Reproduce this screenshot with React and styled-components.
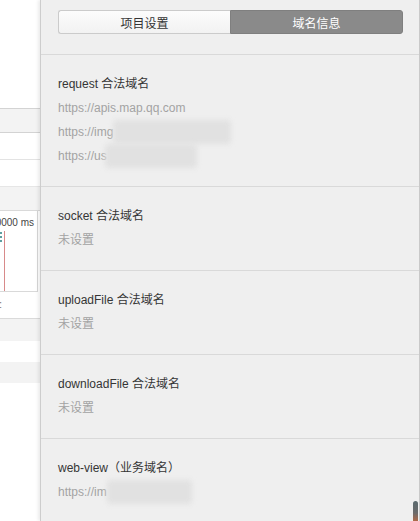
import React from "react";
import styled, { createGlobalStyle } from "styled-components";

const Global = createGlobalStyle`
  html, body { margin: 0; padding: 0; background: #fff; }
  body { font-family: "Liberation Sans", Arial, "Noto Sans CJK SC", sans-serif; }
`;

const Page = styled.div`
  display: flex;
  width: 420px;
  height: 521px;
  overflow: hidden;
`;

const Left = styled.div`
  width: 40px;
  flex: none;
  display: flex;
  flex-direction: column;
  background: #fff;
  overflow: hidden;
`;

const Strip = styled.div`
  height: ${(p) => p.$h}px;
  flex: none;
  background: ${(p) => (p.$gray ? "#f3f3f3" : "#fff")};
  border-bottom: 1px solid ${(p) => p.$line || "transparent"};
  box-sizing: border-box;
  position: relative;
  font-size: 11px;
  color: #555;
`;

const ChartBox = styled.div`
  height: 81px;
  width: 38px;
  flex: none;
  box-sizing: border-box;
  border-right: 1px solid #d6d6d6;
  border-bottom: 1px solid #d9d9d9;
  display: flex;
  flex-direction: column;
  overflow: hidden;
`;

const ChartLabel = styled.div`
  display: flex;
  justify-content: flex-end;
  font-family: "Liberation Sans", Arial, sans-serif;
  font-size: 10px;
  color: #444;
  white-space: nowrap;
  padding: 6px 3px 0 0;
  line-height: 12px;
  overflow: hidden;
`;

const ChartBody = styled.div`
  flex: 1;
  display: flex;
`;

const Dashes = styled.div`
  width: 2px;
  margin-top: 3px;
  height: 10px;
  border-left: 2px dotted #5f9ea0;
`;

const RedLine = styled.div`
  width: 1px;
  margin-left: 0;
  margin-top: 2px;
  background: #d88a8a;
`;

const Colon = styled.span`
  position: absolute;
  left: -1px;
  top: 6px;
  color: #777;
`;

const Panel = styled.div`
  flex: 1;
  position: relative;
  background: #efefef;
  border-left: 1px solid #cdcdcd;
  border-right: 1px solid #c9c9c9;
  box-shadow: -2px 0 3px rgba(0, 0, 0, 0.08);
  display: flex;
  flex-direction: column;
`;

const Header = styled.div`
  height: 55px;
  flex: none;
  box-sizing: border-box;
  padding: 10px 16px 0 17px;
  border-bottom: 1px solid #d9d9d9;
`;

const Tabs = styled.div`
  display: flex;
  height: 24px;
`;

const Tab = styled.div`
  flex: 1;
  display: flex;
  align-items: center;
  justify-content: center;
  font-size: 12px;
  box-sizing: border-box;
  font-family: "Noto Sans CJK SC", sans-serif;
  ${(p) =>
    p.$active
      ? `background: #8a8a8a; color: #fff; border: 1px solid #7f7f7f; border-radius: 0 3px 3px 0;`
      : `background: linear-gradient(#fcfcfc, #f2f2f2); color: #333; border: 1px solid #cbcbcb; border-right: none; border-radius: 3px 0 0 3px;`}
`;

const Section = styled.div`
  padding: 17px 17px 18px 17px;
  border-bottom: 1px solid ${(p) => (p.$last ? "transparent" : "#d9d9d9")};
`;

const Title = styled.div`
  font-size: 12px;
  line-height: 24px;
  color: #353535;
  white-space: nowrap;
`;

const Value = styled.div`
  font-size: 12px;
  line-height: 24px;
  color: #a3a3a3;
  white-space: nowrap;
  display: flex;
  align-items: center;
`;

const Blur = styled.span`
  display: inline-block;
  width: ${(p) => p.$w}px;
  height: 24px;
  margin-left: ${(p) => p.$ml || 0}px;
  background: #e1e1e1;
  filter: blur(2.5px);
  border-radius: 4px;
`;

const Scroll = styled.div`
  position: absolute;
  right: 1px;
  bottom: 0;
  width: 5px;
  height: 20px;
  border-radius: 3px 3px 0 0;
  background: linear-gradient(#5a6a6e, #6b6b6b 60%, #b06a4a);
`;

const sections = [
  {
    title: "request 合法域名",
    values: [
      { t: "https://apis.map.qq.com" },
      { t: "https://img", blur: 118, ml: 0 },
      { t: "https://us", blur: 92, ml: -2 },
    ],
  },
  { title: "socket 合法域名", values: [{ t: "未设置" }] },
  { title: "uploadFile 合法域名", values: [{ t: "未设置" }] },
  { title: "downloadFile 合法域名", values: [{ t: "未设置" }] },
  { title: "web-view（业务域名）", values: [{ t: "https://im", blur: 85, ml: 0 }] },
];

export default function App() {
  return (
    <>
      <Global />
      <Page>
        <Left>
          <Strip $h={109} $line="#d3d3d3" />
          <Strip $h={24} $gray $line="#d3d3d3" />
          <Strip $h={27} $line="#e3e3e3" />
          <Strip $h={27} $line="#e6e6e6" />
          <Strip $h={24} $gray $line="#d9d9d9" />
          <ChartBox>
            <ChartLabel>0000 ms</ChartLabel>
            <ChartBody>
              <Dashes />
              <RedLine />
            </ChartBody>
          </ChartBox>
          <Strip $h={27} $line="#dadada">
            <Colon>:</Colon>
          </Strip>
          <Strip $h={22} $gray />
          <Strip $h={21} />
          <Strip $h={21} $gray />
          <Strip $h={140} />
        </Left>
        <Panel>
          <Header>
            <Tabs>
              <Tab>项目设置</Tab>
              <Tab $active>域名信息</Tab>
            </Tabs>
          </Header>
          {sections.map((s, i) => (
            <Section key={i} $last={i === sections.length - 1}>
              <Title>{s.title}</Title>
              {s.values.map((v, j) => (
                <Value key={j}>
                  {v.t}
                  {v.blur ? <Blur $w={v.blur} $ml={v.ml} /> : null}
                </Value>
              ))}
            </Section>
          ))}
          <Scroll />
        </Panel>
      </Page>
    </>
  );
}
